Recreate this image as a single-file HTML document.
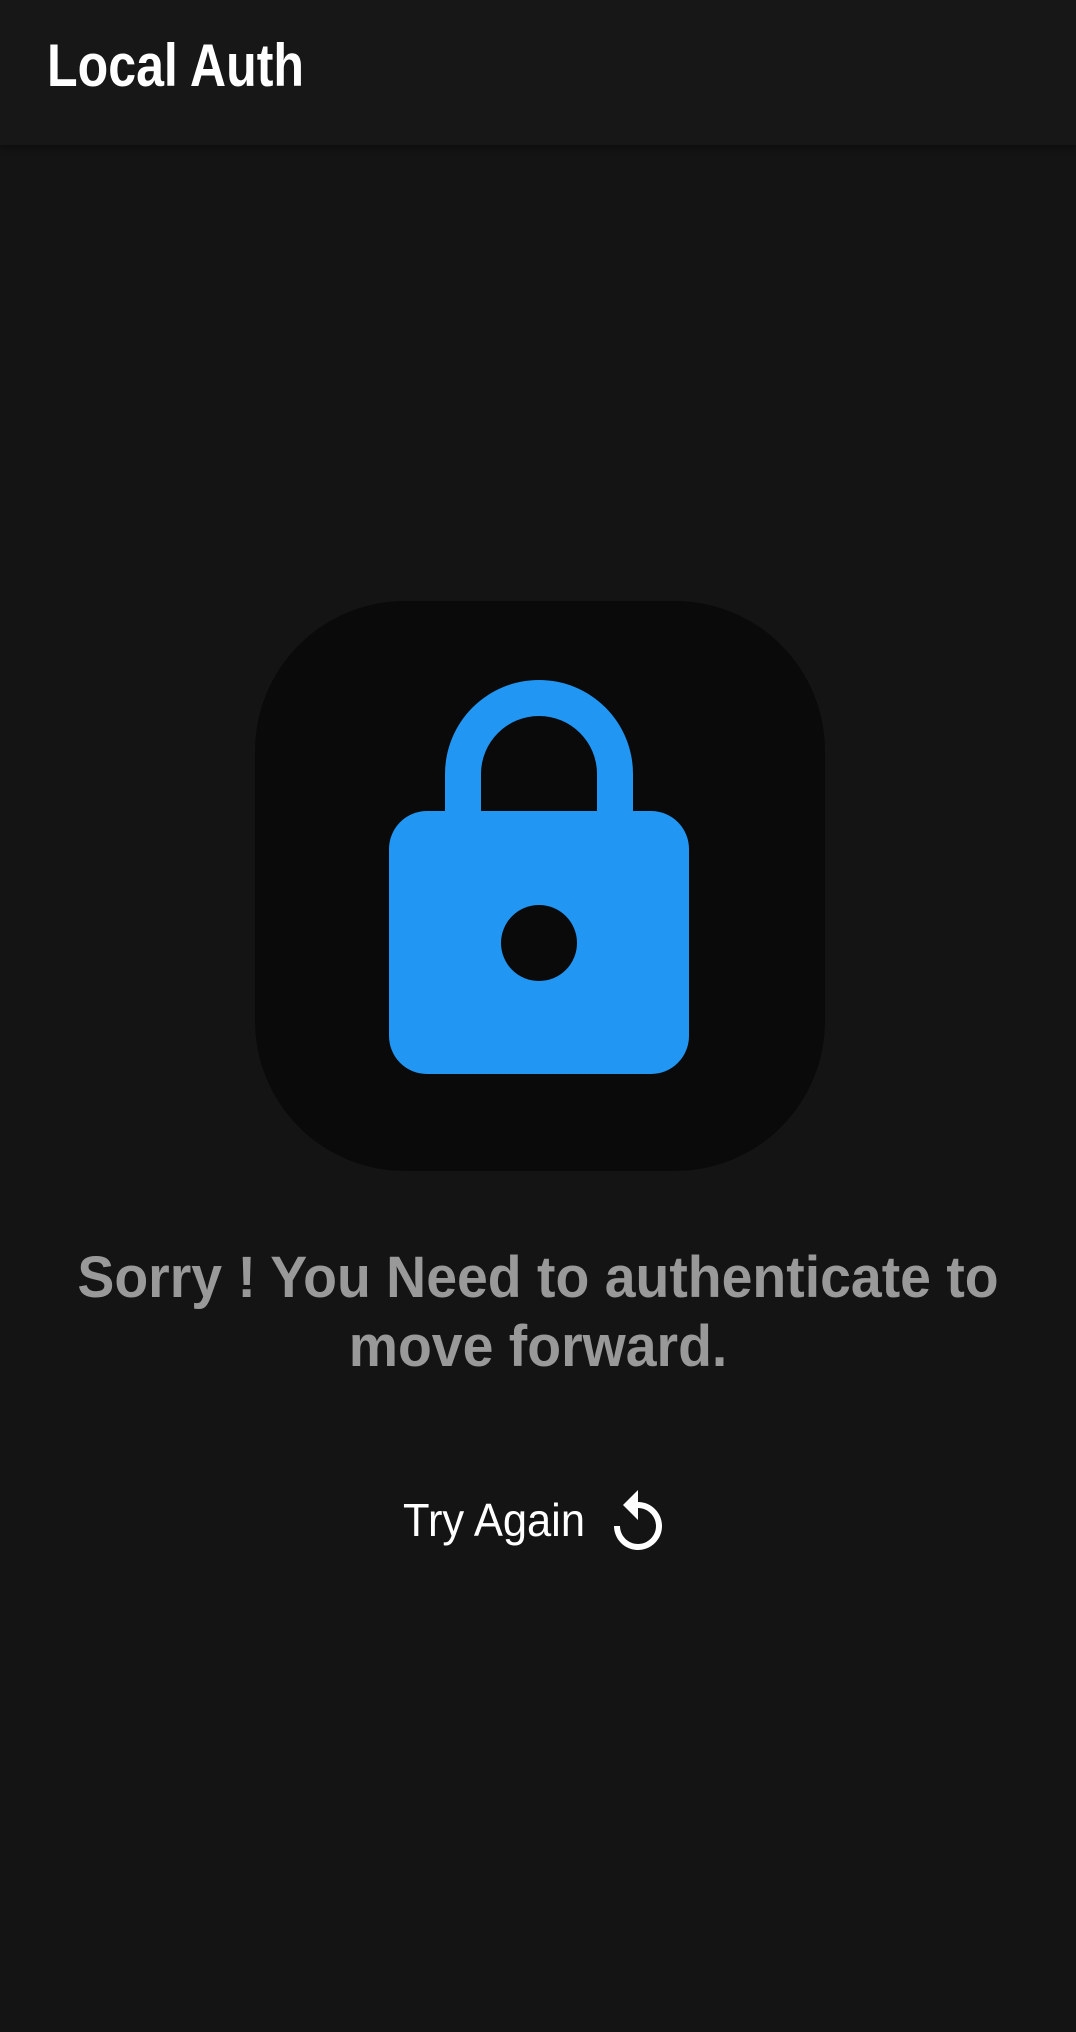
<!DOCTYPE html>
<html><head><meta charset="utf-8"><style>
html,body{margin:0;padding:0;}
body{width:1076px;height:2032px;background:#141414;position:relative;overflow:hidden;font-family:"Liberation Sans",sans-serif;}
.bar{position:absolute;left:0;top:0;width:1076px;height:145px;background:#171717;box-shadow:0 3px 6px rgba(0,0,0,0.35);}
.title{position:absolute;left:47px;top:36px;font-size:60px;font-weight:bold;color:#fff;transform:scaleX(0.835);transform-origin:left top;line-height:1;white-space:nowrap;}
.box{position:absolute;left:255px;top:601px;width:570px;height:570px;background:#0a0a0a;border-radius:150px;}
.msg{position:absolute;left:0;width:1076px;top:1243px;text-align:center;color:#999;font-weight:bold;font-size:58px;line-height:69px;transform:scaleX(0.955);transform-origin:center top;}
.msg div{white-space:nowrap;width:1400px;margin-left:-162px;}
.try{position:absolute;left:403px;top:1497px;font-size:46px;color:#fff;transform:scaleX(0.945);transform-origin:left top;line-height:1;white-space:nowrap;}
</style></head><body>
<div class="bar"><div class="title">Local Auth</div></div>
<div class="box"></div>
<svg style="position:absolute;left:0;top:0" width="1076" height="1200">
<path d="M445 811 V774 A94 94 0 0 1 633 774 V811 H597 V774 A58 58 0 0 0 481 774 V811 Z" fill="#2196F3"/>
<rect x="389" y="811" width="300" height="263" rx="38" fill="#2196F3"/>
<circle cx="539" cy="943" r="38" fill="#0a0a0a"/>
</svg>
<div class="msg"><div>Sorry ! You Need to authenticate to</div><div>move forward.</div></div>
<div class="try">Try Again</div>
<svg style="position:absolute;left:602px;top:1487px" width="72" height="72" viewBox="0 0 24 24"><path fill="#fff" d="M12 5V1L7 6l5 5V7c3.31 0 6 2.69 6 6s-2.69 6-6 6-6-2.69-6-6H4c0 4.42 3.58 8 8 8s8-3.58 8-8-3.58-8-8-8z"/></svg>
</body></html>
